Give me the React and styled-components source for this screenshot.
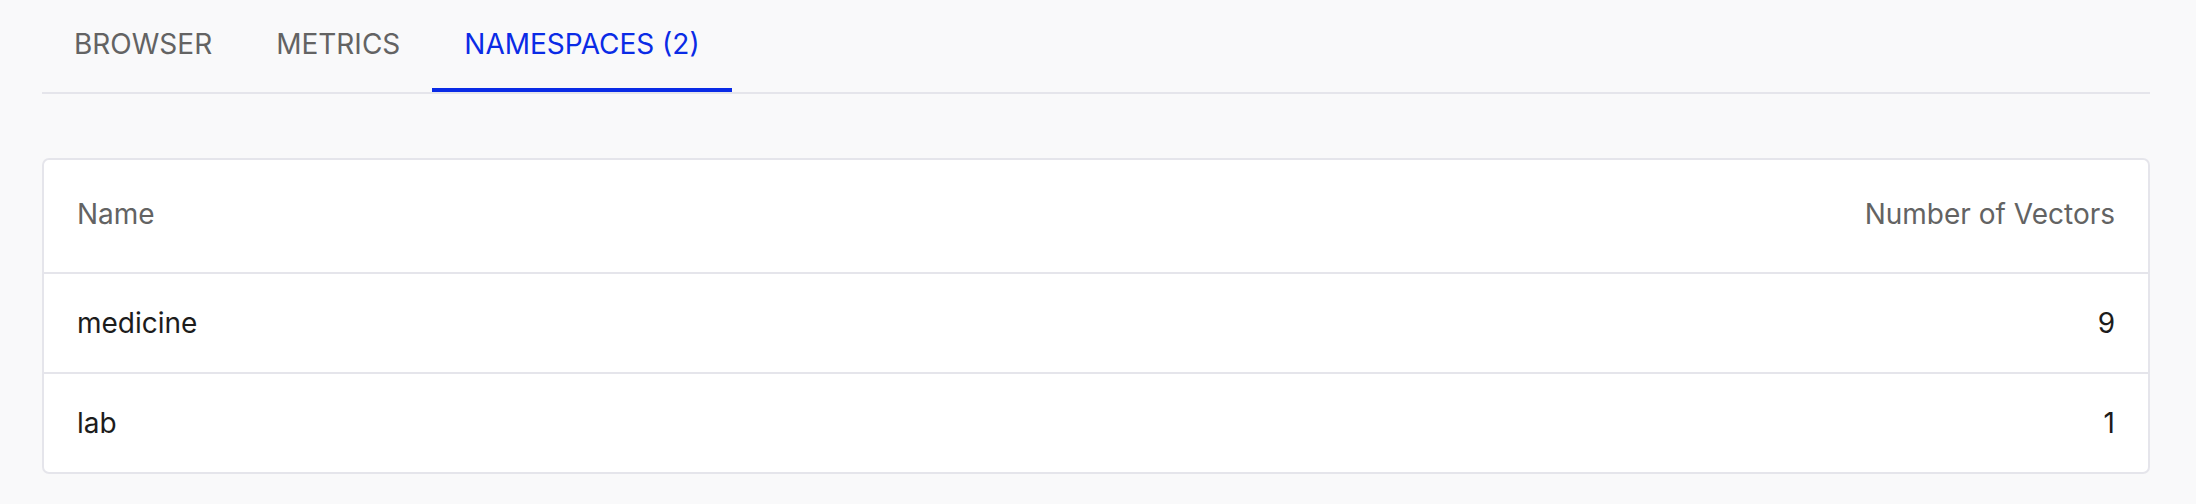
import React from 'react';
import styled, { createGlobalStyle } from 'styled-components';

const GlobalStyle = createGlobalStyle`
  html, body {
    margin: 0;
    padding: 0;
    background: #f9f9fa;
    font-family: Inter, "Noto Sans", sans-serif;
  }
`;

const tabs = ['BROWSER', 'METRICS', 'NAMESPACES (2)'];

const namespaces = [
  { name: 'medicine', count: 9 },
  { name: 'lab', count: 1 },
];

const App = () => {
  return (
    <>
      <GlobalStyle />
      <Page>
        <TabList>
          {tabs.map((tab, i) => (
            <Tab key={tab} active={i === 2}>
              {tab}
            </Tab>
          ))}
        </TabList>
        <TableCard>
          <Table>
            <thead>
              <tr>
                <HeadCell>Name</HeadCell>
                <HeadCell align="right">Number of Vectors</HeadCell>
              </tr>
            </thead>
            <tbody>
              {namespaces.map((ns) => (
                <tr key={ns.name}>
                  <Cell>{ns.name}</Cell>
                  <Cell align="right">{ns.count}</Cell>
                </tr>
              ))}
            </tbody>
          </Table>
        </TableCard>
      </Page>
    </>
  );
};

const Page = styled.div`
  box-sizing: border-box;
  width: 2196px;
  height: 504px;
  padding: 0 46px 0 42px;
  background: #f9f9fa;
`;

const TabList = styled.div`
  display: flex;
  border-bottom: 2px solid #e5e5eb;
`;

const Tab = styled.div.withConfig({ shouldForwardProp: (p) => p !== 'active' })`
  padding: 27px 32px 27px;
  font-size: 28px;
  line-height: 34px;
  font-weight: 400;
  color: ${(p) => (p.active ? '#0a2be6' : '#636363')};
  border-bottom: 4px solid ${(p) => (p.active ? '#0a2be6' : 'transparent')};
  white-space: nowrap;
  cursor: pointer;
`;

const TableCard = styled.div`
  margin-top: 64px;
  background: #fff;
  border: 2px solid #e5e5eb;
  border-radius: 7px;
  overflow: hidden;
`;

const Table = styled.table`
  width: 100%;
  border-collapse: collapse;
  font-size: 28px;
  line-height: 34px;

  tbody tr td {
    border-top: 2px solid #e5e5eb;
  }
`;

const HeadCell = styled.th`
  padding: 37px 33px 41px;
  text-align: ${(p) => p.align || 'left'};
  font-weight: 400;
  color: #636363;
`;

const Cell = styled.td`
  padding: 32px 33px;
  text-align: ${(p) => p.align || 'left'};
  color: #1c1c1c;
`;

export default App;
